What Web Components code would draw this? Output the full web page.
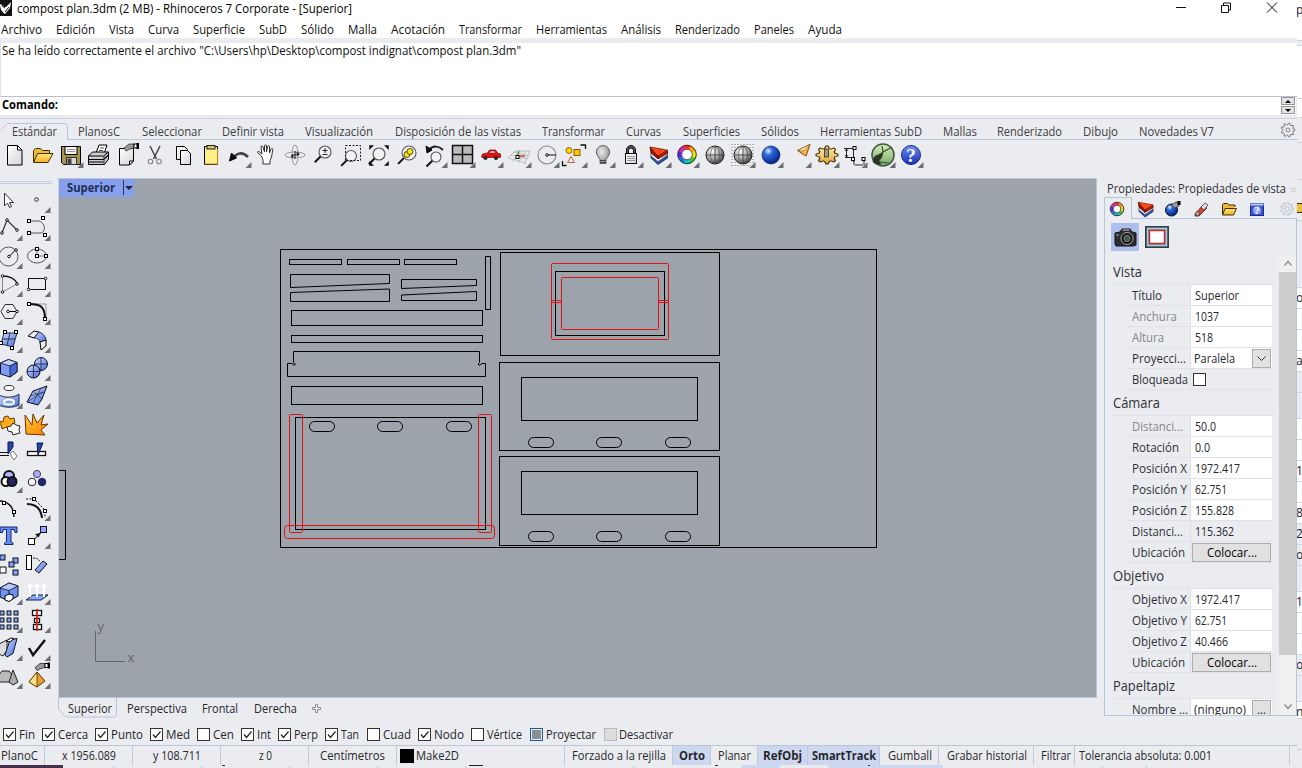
<!DOCTYPE html>
<html lang="es"><head><meta charset="utf-8"><title>compost plan.3dm - Rhinoceros 7 Corporate</title>
<style>
html,body{margin:0;padding:0;width:1302px;height:768px;overflow:hidden;background:#ebecf0}
body{font:12px/16px "Open Sans","Noto Sans",sans-serif;color:#202126}
</style></head><body>
<rhino-app></rhino-app>
<script>
const el=(name,css,html)=>{
  customElements.define(name,class extends HTMLElement{
    connectedCallback(){
      if(this.shadowRoot)return;
      const r=this.attachShadow({mode:'open'});
      r.innerHTML='<style>*{box-sizing:border-box}:host{display:block;box-sizing:border-box}'+css+'</style>'+(typeof html==='function'?html(this):html);
    }
  });
};

/* Label that condenses its glyphs to an exact advance width */
customElements.define('fit-text',class extends HTMLElement{
  connectedCallback(){
    if(this.shadowRoot)return;
    const w=+this.getAttribute('w');
    const r=this.attachShadow({mode:'open'});
    r.innerHTML=`<style>:host{display:inline-block;flex:none;width:${w}px;white-space:pre}span{display:inline-block;transform-origin:0 50%}</style><span><slot></slot></span>`;
    const s=r.querySelector('span'),n=s.getBoundingClientRect().width;
    if(n)s.style.transform=`scaleX(${w/n})`;
  }
});
const T=(t,w,a='')=>`<fit-text w="${w}" ${a}>${t}</fit-text>`;
/* items: [label, start, width] laid one after another */
const line=items=>{let p=0;return items.map(([t,x,w,a])=>{const m=x-p;p=x+w;return T(t,w,`style="margin-left:${m}px${a?';'+a:''}"`)}).join('')};

/* ---------- icons: 28 by 28 cells ---------- */
const sq=(x,y,s=3)=>`<rect x="${x-s/2}" y="${y-s/2}" width="${s}" height="${s}" fill="#fff" stroke="#000"/>`;
const dot=(x,y)=>`<circle cx="${x}" cy="${y}" r="1.3" fill="#fff" stroke="#000" stroke-width=".9"/>`;
const L=(d,c='#000',w=1,x='')=>`<path d="${d}" fill="none" stroke="${c}" stroke-width="${w}" ${x}/>`;
const P=(d,f,c='#000',w=1)=>`<path d="${d}" fill="${f}" stroke="${c}" stroke-width="${w}" stroke-linejoin="round"/>`;
const C=(x,y,r,f,c='#000',w=1)=>`<circle cx="${x}" cy="${y}" r="${r}" fill="${f}" stroke="${c}" stroke-width="${w}"/>`;
const R=(x,y,w,h,f,c='#000',sw=1)=>`<rect x="${x}" y="${y}" width="${w}" height="${h}" fill="${f}" stroke="${c}" stroke-width="${sw}"/>`;
const wheel=(x,y,r)=>{const cs=['#ff2a1a','#ff9a00','#f2e600','#39c41f','#00c7c0','#1670ee','#5b22e0','#e01bb4'];let s='';
  cs.forEach((c,i)=>{const a=(i*45-112.5)*Math.PI/180,b=(i*45-66)*Math.PI/180,q=r-2;
  s+=L(`M${x+q*Math.cos(a)} ${y+q*Math.sin(a)}A${q} ${q} 0 0 1 ${x+q*Math.cos(b)} ${y+q*Math.sin(b)}`,c,r*.4)});
  return s+C(x,y,r-.2,'none','#222',.9)+C(x,y,r*.55,'#fff','#333',.8)};
const gear=(x,y,r,f,c,n=8,w=1)=>{let d='';for(let i=0;i<n*4;i++){const a=(i-.5)*Math.PI/(2*n),q=(i%4<2)?r:r*.74;d+=(i?'L':'M')+(x+q*Math.cos(a)).toFixed(2)+' '+(y+q*Math.sin(a)).toFixed(2)}return P(d+'Z',f,c,w)};
const brush=(x,y)=>P(`M${x} ${y+4}l5-4 5 0v4l-4 1-4 2z`,'#9a9a9a','#333',.8)+R(x+10,y,4,4,'#fff')+R(x+13,y-.5,1.5,5,'#000');
const layers=(s=1)=>`<g transform="translate(14 14) scale(${s}) translate(-14 -14)">`+P('M7 13l7 7 9.500-6v3l-9.500 6.500L7 17z','#2554a8','#12254f',.8)+P('M7 11l7 6 9.500-6v3L14 20.500 7 15z','#fff','#556',.7)+P('M6 6l8 9v3l-7-6z','#8e1606','#400',.7)+P('M14 15l9.500-5.500v3L14 18z','#b51d08','#400',.7)+P('M6 6l17.500 3.200L14 15z','#ff4a18','#7a1000',.8)+'</g>';
const ball=(id)=>C(15,14,9,`url(#${id})`,'#222',1)+L('M6.500 14h17M15 5.500v17','#333',.8)+`<ellipse cx="15" cy="14" rx="4.500" ry="8.500" fill="none" stroke="#444" stroke-width=".6"/>`;
const mag=(x,y,r)=>L(`M${x-r*.7} ${y+r*.7}l-6 6`,'#111',2)+C(x,y,r,'rgba(255,255,255,.35)','#555',1.1);
const bx=(x,y,f='#7ea0ff',s=5)=>R(x,y,s,s,f,'#111',1);
const defs=`<defs>
<linearGradient id="pg" x2="1" y2="1"><stop offset="0" stop-color="#fff"/><stop offset="1" stop-color="#d3d5d8"/></linearGradient>
<linearGradient id="fo" x2="0" y2="1"><stop offset="0" stop-color="#ffe27a"/><stop offset="1" stop-color="#f0b429"/></linearGradient>
<linearGradient id="ge" x2="0" y2="1"><stop offset="0" stop-color="#fff0b0"/><stop offset="1" stop-color="#dba53a"/></linearGradient>
<linearGradient id="ex" x2="1" y2="1"><stop offset="0" stop-color="#ffd23a"/><stop offset="1" stop-color="#ff7800"/></linearGradient>
<radialGradient id="gb" cx=".35" cy=".3" r=".8"><stop offset="0" stop-color="#fff"/><stop offset=".5" stop-color="#a8a8a8"/><stop offset="1" stop-color="#303030"/></radialGradient>
<radialGradient id="bu" cx=".4" cy=".35" r=".8"><stop offset="0" stop-color="#eee"/><stop offset="1" stop-color="#777"/></radialGradient>
<radialGradient id="bb" cx=".35" cy=".28" r=".75"><stop offset="0" stop-color="#e8f2ff"/><stop offset=".3" stop-color="#2f6ce0"/><stop offset="1" stop-color="#021e80"/></radialGradient>
<linearGradient id="gr" x2="0" y2="1"><stop offset="0" stop-color="#d5efb8"/><stop offset="1" stop-color="#77a968"/></linearGradient>
<linearGradient id="qb" x2="0" y2="1"><stop offset="0" stop-color="#6f8ef5"/><stop offset="1" stop-color="#1a31ae"/></linearGradient>
<linearGradient id="bl" x2="1" y2="1"><stop offset="0" stop-color="#cfdcff"/><stop offset="1" stop-color="#4468dc"/></linearGradient></defs>`;
const I={
new:P('M7.500 4.500h10l4.500 4.500v15H7.500z','url(#pg)')+P('M17.500 4.500v4.500h4.500z','#fff'),
open:P('M5.500 21V9.500l2-2h5l2 2h7v3','#eeb93c','#3c2f00')+P('M5.500 21.500l4-9h15.500l-5 9z','url(#fo)','#3c2f00'),
save:P('M5.500 5.500h19v18H7.500l-2-2z','#a8964a')+R(9,5.500,12,8,'#f3f3f3')+L('M11 8.500h8M11 10.500h8','#999')+R(10.500,16.500,10,7,'#d9d9d9','#333')+R(12,18,3,5,'#444','#444'),
print:P('M12 12l3-8h8l-3 9','#fff')+L('M16 7h4M15 9.500h4','#555')+P('M4.500 15l4-4h16v7l-4 5.500h-16z','#ccc')+P('M4.500 15h15l5-4','none')+L('M4.500 18.500h15l5-4.500M4.500 21h15','#000',1.2)+L('M20 15v8','#333'),
page:P('M7.500 7.500h14V20l-4 4h-10z','url(#pg)')+P('M21.500 20h-4v4z','#fff')+brush(12,3),
cut:L('M10 5l6.500 13M20 5l-6.500 13','#444',1.500)+C(10.500,20.500,2.300,'none','#888',1.1)+C(19,20.500,2.300,'none','#888',1.1),
copy:P('M8.500 5.500h8l3 3v10h-11z','url(#pg)')+P('M12.500 9.500h7l3 3v11h-10z','url(#pg)'),
paste:P('M8.500 5.500h13v18h-13z','#fff08a')+R(11,4.500,8,3.500,'#d8c36b','#222')+L('M21.500 8v15h-13','#c58d19',1.2),
undo:L('M9 17c5-6 10-6 15-1','#444',2.600)+P('M5.500 20l2-8 5 5z','#111'),
hand:P('M9.500 15L6 12c-1-1 0-2 1-1.500l3 2.500-1-7c0-1.500 1.500-1.500 2 0l1.500 5V5c0-1.500 2-1.500 2 0v6l1-5.500c.4-1.300 2-1 2 .5v6l1.500-4c.5-1 2-.6 1.800.6L19.500 16l-1.500 3.500V23h-7v-4z','#fff','#333'),
orbit:`<ellipse cx="15" cy="14" rx="10" ry="3" fill="none" stroke="#999"/><ellipse cx="15" cy="14" rx="3" ry="10" fill="none" stroke="#999"/>`+L('M15 10v8M11 14h8','#222',1.1)+P('M11 15.500l2-1.500v3zM17 11l2.500 2-2.500 1z','#222','#222',.6),
zoom:mag(17,11,6)+L('M14.500 9.500h5M17 7v5M14.500 13.500h5','#222'),
zwin:mag(15,15,5.500)+`<rect x="9.500" y="4.500" width="15" height="15" fill="none" stroke="#222" stroke-dasharray="2 1.500"/>`,
zext:mag(15,13,6)+P('M5.500 4.500h4l-4 4zM24.500 4.500v4l-4-4zM24.500 24.500h-4l4-4zM5.500 24.500v-4l4 4z','#111','#111',.5),
zsel:mag(17,12,7)+C(15,13.500,3,'#ffe500','#222',.8)+C(18,10.500,3,'#ffe500','#222',.8),
zund:L('M9 9c4-5 10-4 14 0','#222',2)+P('M6 5l1 7 5-3z','#111')+mag(16,16,5),
four:R(4.500,4.500,20,18,'#bbb','#111',1.500)+L('M14.500 4v19M4 13.500h21','#111',1.500),
car:P('M5.500 16l1-3 5-1 2-3h6l2 3 3 1v3.500H6z','#e01515','#7a0000',.7)+P('M13 12l1.200-2h4.300l1.200 2z','#f4dede','#800',.5)+C(9.500,17,1.600,'#333','#222')+C(20,17,1.600,'#333','#222'),
cpl:L('M4 17l7-7h15M8 21l9-11M4 17l18 5M7 14l17 4M9 11l17 4M14 22l8-12M20 23l6-13','#b2b2b2',.8)+L('M13 15l2-5','#22a022',1.200)+L('M13 15h8','#d11',1.200)+sq(13.500,16),
circ:C(15,14,9,'none','#888',1.1)+L('M15 14h9','#222',1.100)+dot(15,14),
objs:C(9,9.500,3,'#ffd400','#a06800')+R(14,8.500,6,6,'#ffc400','#8a5c00')+P('M11 15.500l3.500 6h-7z','none','#c06030')+L('M20.500 4h5v4M2.500 20v4.500h4','#111',1.300),
bulb:P('M15 4.500a6.600 6.600 0 0 0-5 11l2 3v4h6v-4l2-3a6.600 6.600 0 0 0-5-11z','url(#bu)','#666')+L('M12 19.500h6M12 21.500h6','#444',1),
lock:P('M10.500 13V9a4.500 4.500 0 0 1 9 0v4h-2V9.500a2.500 2.500 0 0 0-5 0V13z','#555','#111')+R(9.500,12.500,11,10,'url(#pg)','#111')+L('M11 15.500h8M11 17.500h8M11 19.500h8','#999'),
layers:layers(),
wheel:wheel(15,13.500,9.500),
shade:ball('gb'),
rend:L('M3 3.500h24M3 6.500h24M3 9.500h24M3 12.500h24M3 15.500h24M3 18.500h24M3 21.500h24M3 24.500h24','#b4b4b4',1,'stroke-dasharray="2 1"')+ball('gb'),
blue:C(15,14,9,'url(#bb)','#0a1f60',.7),
spot:P('M13.500 9.500l12.500-6-4 11.500z','#ffb84b','#7b4300')+P('M13.500 9.500l12.500-6-6 6.500z','#fff0c0','#7b4300',.5),
gear:`<g transform="translate(0 2.500) scale(1 .82)">${gear(15,14,11,'url(#ge)','#3f2d00',8,1.2)}</g>`+R(12.500,8,4,8,'#999','#3f2d00',.8),
dim:L('M6.500 8v8M4 7.500h11M5 16.500h7M13.500 7v14M14 20v4M24 20v4M15 24h8','#111',.9)+sq(14.500,7)+sq(13,18)+sq(23.500,18)+L('M5 10l1.500-2 1.500 2M5 14l1.500 2 1.500-2','#111',.8),
gh:C(15,14,11,'url(#gr)','#4a5a48',1.600)+P('M5 21c0-4 2-7 5-7l5-3-1 5-3 4 2 3c-3 1-6 0-8-2z','#2a3427','#2a3427',.5)+L('M14 5l1 6 9-5M12 21l9 1','#38512f',1.200),
help:C(15,14,9.500,'url(#qb)','#1a2a80')+`<text x="15" y="20.500" font-family="Liberation Serif,serif" font-weight="700" font-size="19" fill="#fff" text-anchor="middle">?</text>`,
ptr:P('M9.500 7v13l3-3 2 4.500 2-1-2-4h4z','#fff','#333'),
point:C(13.500,13.500,1.800,'#fff','#222'),
pline:L('M7 19l5-13 10 10','#333',1.200)+dot(7,19)+dot(12,6)+dot(22,16),
crv:L('M6 7h10c7 2 7 12 1 12H7','#555')+sq(6,7)+sq(20,4)+sq(6,19)+sq(22,21),
cir:C(13.500,14.500,9.500,'none','#555')+L('M14.500 14l6-6')+dot(14,14.500)+dot(21,8),
ellp:`<ellipse cx="14" cy="14" rx="9.500" ry="7" fill="none" stroke="#555"/>`+L('M14 14h9M14 14V7','#777')+sq(14,14)+sq(14,7)+sq(23,14),
arc:L('M7.500 6v16M7.500 22L22 14','#888',1)+L('M7.500 6c7 0 13 3 15 8','#111',1.500)+dot(7.500,6)+dot(7.500,22)+dot(22,14),
rect:R(5.500,8.500,17,11,'none','#111')+dot(5.500,19.500)+dot(22.500,8.500),
poly:P('M6 13.500l4-7h8l4 7-4 7h-8z','none','#333')+L('M13 13.500h9')+dot(13,13.500)+dot(22,13.500),
fil:L('M6 6h17v14','#999')+L('M6 6c12 0 16 3 16 15','#111',2)+sq(6,6)+sq(22,21),
srf:P('M9 7h13l-4 14-12-3z','url(#bl)','#234')+L('M15 7l-3 12M8 13h12','#234')+sq(10,6)+sq(21,6)+sq(6,17)+sq(17,22),
bend:P('M5 10l6-5 5 1-5 6z','#eee')+P('M11 12l5-6c5 2 7 5 7 9l-6 2c0-3-2-5-6-5z','url(#bl)','#234')+P('M17 16l6-2v6l-5 4z','#eee'),
cube:P('M5.500 9l8-3.500 8.500 3v9.500l-7 5-9.500-3z','#7d9af4','#112')+P('M5.500 9l8-3.500 8.500 3-7 3.500z','#c3d1ff','#112',.8)+P('M15 12l7-3.500V18l-7 5z','#4767d8','#112',.8),
sph:C(18,10,6.500,'url(#bl)','#112')+C(10.500,17.500,6.500,'url(#bl)','#112')+L('M10.500 11v13M4 17.500h13M18 3.500v13M12 10h12','#112',.7),
cyl:`<ellipse cx="14" cy="6" rx="5" ry="2.500" fill="#fff" stroke="#333"/>`+P('M4 13c5 3 15 3 20-1v11c-5 3-15 3-20 0z','url(#bl)','#234')+`<ellipse cx="14" cy="20" rx="5" ry="2.600" fill="#86a0ee" stroke="#fff" stroke-width="2"/>`,
patch:P('M4 20l6-11 14-5-5 13-4 6z','url(#bl)','#112')+L('M7 14l14-4M10 21l8-15M4 20l16-10M10 9l9 8','#234',.7),
puz:P('M4 11l4 1 1-5 4-1 2 3 4-1 1 5-3 2 1 3-4 1-3-2-4 2-1-4z','#ffac1c','#6b3900')+P('M12 17l4-1 2-3 3 2 4 1-1 4 1 3-4 1-3 1-1-3-4-1z','#fff','#222'),
exp:P('M3 24L2 5l7 10 1-11 4 9 7-8-3 10 7-1-7 6 4 5z','url(#ex)','#6b3200'),
trim:P('M13 4h5v5l-5 7z','#28459c','#001a66')+L('M4 14.500h9M4 17.500h10','#111',1.2)+P('M15 16l3-3 4 5-3 4z','#fff','#777'),
split:R(4.500,13.500,18,4,'#fff','#111',1.300)+P('M14 5h6l-5 12z','#28459c','#001a66'),
bool:C(14,10,5,'#b5b9ff','#111',2)+C(11,15.500,4.500,'#fff','#111',2)+C(17,15.500,4.500,'#24246c','#111',2),
comp:C(14,8,3.600,'#aaa7ff','#444')+C(9,16,3.800,'#fff','#222')+C(19,16,3.800,'#24246c','#24246c'),
arccrv:L('M4 7c8 0 15 5 15 16','#111',1.400)+sq(9,9)+sq(19,18),
offs:L('M4 10c9 0 14 5 15 14','#111',2)+L('M3 5h8l11 11v8','#111',1,'stroke-dasharray="2 1.500"')+sq(11,5)+sq(22,17),
text:P('M5 5h17v5.500h-2l-1-3h-3v12l2 1.500v1.500H9.500v-1.500l2-1.500v-12h-3l-1 3H5z','#668af4','#14276f'),
move:L('M9 20L19 9')+P('M12.500 12.500l5-1.500-2 4z','#111','#111',.5)+bx(5.500,16.500,'#fff',6)+bx(17.500,4.500,'#8ea9ff',6),
arr:bx(5,5)+bx(18,8)+bx(14,12)+bx(18,20)+bx(5,17,'#fff',6),
rot:R(3.500,5.500,5,14,'#fff')+L('M10 8c4 0 6 1 7 4','#222',1,'stroke-dasharray="2 1"')+P('M12 20l8-9 4 3-8 9z','url(#bl)','#112'),
cubec:P('M5 10l9-5 9 3v10l-9 5-9-4z','#6e90f2','#112')+P('M5 10l9-5 9 3-9 4.500z','#b7c8ff','#112',.8)+L('M14 12.500V22','#112')+P('M10 18l4-2 4 1v4l-4 2.500-4-1.500z','#fff'),
extr:P('M3 22l7-5h15l-7 5z','#83a5ff','#123')+L('M7 19V8M14 19V7M21 19V8','#fff',2)+P('M4 9l3-4 3 4zM11 9l3-4 3 4zM18 9l3-4 3 4z','#fff','#fff',.4),
grid:[5,12,19].map(x=>[5,12,19].map(y=>bx(x,y,'#8aa5f5',4)).join('')).join(''),
align:R(9.500,4.500,9,5,'#fff','#111',1.300)+R(11.500,12.500,5,4,'#fff','#111',1.300)+R(10.500,18.500,8,5,'#fff','#111',1.300)+L('M14 3v22','#e01818',1.800),
tilt:P('M4 10l8-4v10l-4 6-4-2z','#ddd','#222')+P('M15 6l7-1.500-4 15-6 3.500-2-2z','url(#bl)','#112')+P('M11 7l5-3 3 .5-4 3.500z','#fff'),
check:L('M6 14l4 7 12-15','#111',2.400),
solid:P('M3 14l4-5h7l4 5-1 6H6l-3-1z','#bbb','#222')+P('M18 8l5 12-5 3-4-3z','#aaa','#222'),
pyr:P('M14 10l8 9-8 6-8-5z','#e8a030','#553300')+P('M14 10v15l-8-5z','#ffe08a','#553300',.8)+brush(12,1.5),
folder:P('M7.500 20V9.500l1-1h4l1.500 1.500h6v2','#eeb93c','#3c2f00')+P('M7.500 20l2.500-6.500h11.500l-3 6.500z','url(#fo)','#3c2f00'),
bomb:C(12.500,15,6,'url(#bb)','#112')+P('M12 10l5-3 3 0v4l-4 2z','#9a9a9a','#333',.8)+R(19,6.500,2,3,'#111'),
tube:P('M8 19l8-9 4 3-8 8-4 0z','#d44426','#612',.8)+P('M14 12l4-4 3 2-4 5z','#ddd','#444',.8)+P('M8 19l2-3 3 3-2 2z','#aaa','#444',.8),
helpb:R(7.500,8.500,13,12,'#3c57c5','#1a2a8a')+R(7.500,8.500,13,2,'#bcccf6','#6c86d0',.5)+C(14,15.300,4,'#8fa6ee','none')+`<text x="14" y="19" font-family="Liberation Serif,serif" font-weight="700" font-size="10" fill="#fff" text-anchor="middle">?</text>`,
wheels:wheel(14,14,7),layers2:layers(.85),
pale:gear(14,14,6.500,'none','#b8c0c8',9)+C(14,14,2.500,'none','#b8c0c8'),
opts:gear(14,14,7,'#ebecf0','#777',9)+C(14,14,2,'none','#777',.9)
};
el('rh-icon',':host{width:28px;height:28px;flex:none}svg{display:block;overflow:visible}',h=>
`<svg width="28" height="28" viewBox="0 0 28 28">${defs}${I[h.getAttribute('name')]||''}${h.hasAttribute('more')?'<path d="M21.500 27h6v-6z" fill="#6d6e71"/>':''}</svg>`);
const icon=s=>{const m=s.endsWith('+');return `<rh-icon name="${s.replace('+','')}" ${m?'more':''}></rh-icon>`};

el('title-bar',':host{display:flex;height:20px;background:#fff;align-items:flex-start;color:#000}.logo{width:16px;height:16px;margin-right:1px}.cap{margin-top:1px}.b{margin-left:824px;margin-top:2px}',
`<svg class="logo" viewBox="0 0 16 16"><path d="M0 0h12v16H0z" fill="#111"/><path d="M0 4c3 1 3 3 6 3l5-5-1 6-5 6C2 12 0 9 0 4z" fill="#fff"/><path d="M2 6l3 2M5 12l4-5" stroke="#111"/></svg>
<div class="cap">${T('compost plan.3dm (2 MB) - Rhinoceros 7 Corporate - [Superior]',335,'')}</div>
<svg class="b" width="104" height="14" fill="none" stroke="#111"><path d="M0 5.500h10M45.500 3.500h7v7h-7zM47.500 3v-2h7v7h-2M91 .5l10 10M101 .5l-10 10"/></svg>`);

el('menu-bar',':host{display:flex;height:18px;background:#fff;color:#111;padding-top:2px}',()=>line([['Archivo',1,41],['Edición',56,39],['Vista',109,25],['Curva',148,31],['Superficie',193,52],['SubD',259,28],['Sólido',301,33],['Malla',348,29],['Acotación',391,54],['Transformar',459,63],['Herramientas',536,71],['Análisis',621,40],['Renderizado',675,65],['Paneles',754,40],['Ayuda',808,34]]));

el('command-area',`:host{height:80px;border-top:5px solid #ebecf0;background:#ebecf0}
.h{height:54px;background:#fff;border-left:1px solid #dfe2e8;border-bottom:1px solid #b9c2d2;padding:0 0 0 1px;color:#111}
.p{display:flex;height:18px;background:#fff;padding-left:2px;font-weight:700;color:#000;justify-content:space-between;margin-right:1px}
.s{display:flex;flex-direction:column;gap:1px;width:14px;margin-right:1px;padding-top:0}
.s i{height:8px;background:#e3e3e3;border:1px solid #999;display:grid;place-items:center}
svg{display:block}.e{border-top:1px solid #cdd3de;margin-top:3px}`,
`<div class="h">${T('Se ha leído correctamente el archivo "C:\\Users\\hp\\Desktop\\compost indignat\\compost plan.3dm"',519)}</div>
<div class="p">${T('Comando:',56)}<div class="s"><i><svg width="6" height="3"><path d="M0 3h6L3 0z"/></svg></i><i><svg width="6" height="3"><path d="M0 0h6L3 3z"/></svg></i></div></div><div class="e"></div>`);

el('toolbar-tabs',`:host{height:21px;display:grid;grid-template-columns:68px 1fr 24px;grid-template-rows:21px;color:#3c3d42}
.a{position:relative;display:flex;padding:5px 0 0 12px}.a svg{position:absolute;left:0;top:0}
.r,.o{border-bottom:1px solid #b9c5d9;display:flex;padding-top:5px}.o{padding:0}.o rh-icon{margin:-3px 0 0 1px}`,
`<div class="a"><svg width="68" height="21" fill="none" stroke="#b9c5d9"><path d="M.5 11.500l7-7H65q2.500 0 2.500 2.500v14"/></svg>${T('Estándar',45)}</div><div class="r">${line([['PlanosC',10,42],['Seleccionar',74,60],['Definir vista',154,62],['Visualización',237,68],['Disposición de las vistas',327,126],['Transformar',474,63],['Curvas',558,35],['Superficies',615,57],['Sólidos',693,38],['Herramientas SubD',752,102],['Mallas',875,34],['Renderizado',929,65],['Dibujo',1015,35],['Novedades V7',1071,75]])}</div><div class="o">${icon('opts')}</div>`);

el('tool-bar',':host{display:flex;height:38px;padding-top:1px}',()=>'new open save+ print page cut copy paste undo+ hand orbit zoom zwin zext zsel zund+ four+ car+ cpl+ circ+ objs+ bulb+ lock+ layers+ wheel+ shade rend+ blue+ spot+ gear+ dim+ gh+ help+'.split(' ').map(icon).join(''));

el('tool-palette',':host{width:58px;height:538px;overflow:hidden}.g{border-top:1px solid #c4cddd;border-bottom:1px solid #c4cddd;height:3px;width:52px;margin-top:3px}.t{display:grid;grid-template-columns:28px 28px;grid-auto-rows:28px;margin:2px 0 0 -5px}',()=>'<div class="g"></div><div class="t">'+'ptr point+ pline+ crv+ cir+ ellp+ arc+ rect+ poly+ fil+ srf+ bend+ cube+ sph+ cyl+ patch+ puz exp trim split bool+ comp arccrv offs+ text move+ arr rot cubec+ extr+ grid+ align+ tilt+ check+ solid+ pyr+'.split(' ').map(icon).join('')+'</div>');

/* Top view of the cut sheet, in window pixels */
const box=(x,y,X,Y,r=0)=>`<rect x="${x+.5}" y="${y+.5}" width="${X-x}" height="${Y-y}" rx="${r}"/>`;
const slots=(xs,y)=>xs.map(x=>box(x,y,x+25,y+10,5)).join('');
el('view-port',`:host{width:1039px;height:520px;background:#9da3ab;border:1px solid #bcc5d6;border-left-color:#c7cddb;overflow:hidden;display:grid}
svg,.tag{grid-area:1/1}svg{display:block}.tag{width:75px;height:18px;background:#86a0ee;display:flex;font-weight:700;color:#202c55;padding:1px 0 0 8px;z-index:1;align-items:flex-start}.dd{width:1px;height:15px;background:#334;margin:0 0 0 8px}.ar{border:4px solid transparent;border-top-color:#223;margin:6px 0 0 1px}`,
`<div class="tag">${T('Superior',48)}<i class="dd"></i><i class="ar"></i></div>
<svg width="1037" height="518" viewBox="59 179 1037 518" fill="none" stroke="#000">
<g>${box(280,249,876,547)}${box(289,259,341,264)}${box(347,259,399,264)}${box(404,259,456,264)}${box(485,256,490,309)}
<path d="M290.500 287.500v-13h99v9zM290.500 292.500v9h99v-12.500zM401.500 288.500v-9h75v6zM401.500 295v5.500h75v-9z"/>
${box(291,310,482,325)}${box(291,335,482,342)}${box(291,386,482,404)}
<path d="M293.500 362.500v-11h186v11M293.500 362.500l2 1.500-1.500 1.500-1.500-2h-5v13h198v-13h-4l-1.500 2-2-1.500 1.500-1.500"/>
${box(295,417,485,529)}${slots([309,377,446],421)}
${box(500,252,719,355)}${box(555,271,664,335)}${box(499,362,719,450)}${box(521,377,697,420)}${slots([528,596,665],437)}
${box(499,456,719,545)}${box(521,471,697,514)}${slots([528,596,665],531)}<path d="M58 470.500h7.500v89H58"/></g>
<g stroke="#e01218">${box(289,414,302,532,1)}${box(478,414,491,532,1)}${box(284,525,494,538,3)}${box(551,263,668,339,1)}${box(561,277,658,329,1)}<path d="M551 300.500h10M551 302.500h10M658 300.500h10M658 302.500h10"/></g>
<path d="M95.500 631v30.500H125" stroke="#62666d"/><g fill="#62666d" stroke="none" font-family="Open Sans,Noto Sans,sans-serif" font-size="13"><text x="97.500" y="631">y</text><text x="127.500" y="662">x</text></g></svg>`);

el('view-tabs',`:host{display:flex;height:20px;margin-left:58px;color:#26272b}.a{position:relative;width:59px;height:20px}.a svg{display:block}.a fit-text{position:absolute;left:10px;top:3px}.r{display:flex;padding-top:3px}.pl{margin:6px 0 0 15px}`,
`<div class="a"><svg width="59" height="20" fill="none" stroke="#b9c5d9"><path d="M.5 0v11l7 8H56q2.500 0 2.500-2.500V0"/></svg>${T('Superior',44)}</div><div class="r">${line([['Perspectiva',10,60],['Frontal',85,36],['Derecha',137,43]])}</div><svg class="pl" width="10" height="10"><path d="M3.500.5h2v3h3v2h-3v3h-2v-3h-3v-2h3z" fill="#fff" stroke="#888"/></svg>`);

el('snap-bar',`:host{display:flex;height:27px;padding-top:9px;color:#26272b}
.c{width:13px;height:13px;border:1px solid #333;background:#fff;flex:none;margin-top:1px}.c svg{display:block}
.m{border-color:#1f5a8c;background:#8d8d8d;box-shadow:inset 0 0 0 1px #ddeeff}.d{border-color:#bbb;background:#ddd}`,()=>{
let p=0;return [['Fin',3,19,16,1],['Cerca',42,58,30,1],['Punto',95,111,32,1],['Med',150,166,24,1],['Cen',197,213,21,0],['Int',241,257,14,1],['Perp',278,294,24,1],['Tan',325,341,18,1],['Cuad',367,383,28,0],['Nodo',418,434,30,1],['Vértice',471,487,35,0],['Proyectar',530,546,50,2],['Desactivar',604,619,54,3]].map(([t,b,x,w,k])=>{
const s=`<i class="c ${['','','m','d'][k]}" style="margin-left:${b-p}px">${k==1?'<svg width="11" height="11"><path d="M2 5.500l2.500 3 5-6" fill="none" stroke="#222" stroke-width="1.200"/></svg>':''}</i>`+T(t,w,`style="margin-left:${x-b-13}px"`);p=x+w;return s}).join('')});

el('status-bar',`:host{display:flex;height:20px;border-top:1px solid #b9c5d9;color:#26272b}
.c{height:19px;border-right:1px solid #c0c9da;display:flex;flex:none;padding-top:2px}.on{background:#cdd7f0;font-weight:700}.k{width:14px;height:14px;background:#000;margin:1px 2px 0 3px}`,()=>{
let p=0;return [['PlanoC',1,37,45],['x 1956.089',62,54,133],['y 108.711',153,48,221],['z 0',259,13,309],['Centímetros',320,65,397],['Make2D',416,43,565,2],['Forzado a la rejilla',572,94,673],['Orto',679,26,711,1],['Planar',718,33,758],['RefObj',763,39,808,1],['SmartTrack',812,64,880,1],['Gumball',888,44,939],['Grabar historial',947,80,1034],['Filtrar',1041,30,1075],['Tolerancia absoluta: 0.001',1079,133,1290]].map(([t,x,w,e,k])=>{
const s=`<div class="c ${k==1?'on':''}" style="width:${e-p}px">${k==2?'<i class="k"></i>'+T(t,w):T(t,w,`style="margin-left:${x-p}px"`)}</div>`;p=e;return s}).join('')});

el('under-strip',':host{height:3px}svg{display:block}','<svg width="1302" height="3"><path d="M0 0h63v3H0z" fill="#45304c"/><path d="M113.500 1v2M201.500 1v2M289.500 1v2M377.500 1v2M465.500 1v2M633.500 1v2M1102.500 1v2M1146.500 1v2" stroke="#bcc5d6"/><path d="M742 0h38v3h-38zM828 0h115v3H828z" fill="#cdd7f0"/><path d="M469 .5h14" stroke="#222" stroke-width="1"/><path d="M222 .5h3M715 .5h3M868 .5h2" stroke="#333"/></svg>');

el('prop-row',`:host{display:grid;grid-template-columns:63px 81px;height:21px;margin-left:15px}
.l{border-right:1px solid #dbdfe7;border-bottom:1px solid #dfe2e9;padding:3px 0 0 4px;color:#303136;height:21px}
:host([dim]) .l{color:#85868b}.v{border-bottom:1px solid #dfe2e9;padding:3px 0 0 4px;background:#fff;color:#26272b;display:flex;height:21px}
:host([kind=plain]) .v,:host([kind=button]) .v,:host([kind=check]) .v{background:transparent}
.btn{background:#e1e1e1;border:1px solid #adadad;height:19px;width:79px;text-align:center;margin:-2px 0 0 -3px;color:#000;padding-top:1px}
.ck{width:13px;height:13px;border:1px solid #333;background:#fff;margin:1px 0 0 -2px}
.dd{width:19px;height:19px;border:1px solid #adadad;background:#e1e1e1;margin:-2px 0 0 17px;display:grid;place-items:center;flex:none}
.dd.el{margin:-2px 0 0 6px}`,h=>{
const g=a=>h.getAttribute(a),k=g('kind');let v=g('value')?T(g('value'),+g('vw'),k=='drop'||k=='dots'?'style="margin-left:-1px"':''):'';
if(k=='button')v=`<div class="btn">${T('Colocar...',50)}</div>`;if(k=='check')v='<i class="ck"></i>';
if(k=='drop')v+='<i class="dd"><svg width="9" height="6"><path d="M.5.5l4 4 4-4" fill="none" stroke="#333"/></svg></i>';
if(k=='dots')v+=`<div class="dd el">${T('...',9)}</div>`;
return `<div class="l">${T(g('label'),+g('lw'))}</div><div class="v">${v}</div>`});
el('prop-group',':host{display:block}.h{height:26px;font-size:14px;border-bottom:1px solid #dfe2e9;padding-top:5px;color:#303136}',h=>`<div class="h">${T(h.getAttribute('label'),+h.getAttribute('lw'))}</div><slot></slot>`);
const row=(l,lw,v,vw,k='',dim='')=>`<prop-row label="${l}" lw="${lw}" value="${v}" vw="${vw}" kind="${k}" ${dim}></prop-row>`;

el('props-panel',`:host{width:193px;margin-left:7px;height:538px;display:flex;flex-direction:column;overflow:hidden;color:#303136}
.t{height:19px;flex:none;padding:3px 0 0 3px;display:flex}.t svg{margin:7px 0 0 4px}
.tabs{display:flex;height:22px;flex:none}.ic{display:flex;border-bottom:1px solid #b9c5d9;flex:1;height:22px}.ic rh-icon{margin-top:-2px}
.sel{width:28px;border:1px solid #b9c5d9;border-bottom:0;flex:none}.sel rh-icon{margin:-3px 0 0 -2px}
.ic rh-icon:first-child{margin-left:-1px}.ic rh-icon:last-child{margin-left:2px}
.b{height:497px;border:1px solid #b9c5d9;border-top:0;overflow:hidden;flex:none}
.s{display:flex;height:36px;padding:4px 0 0 6px;gap:6px}.s svg{display:block}
.w{display:flex;height:460px;overflow:hidden}.f{width:160px;margin:4px 14px 0 8px;flex:none;height:456px;overflow:hidden}
.sc{width:17px;background:#f0f0f0;display:flex;flex-direction:column;flex:none;margin-left:-8px}.sc svg{display:block}.th{height:383px;background:#cdcdcd}`,
`<div class="t">${T('Propiedades: Propiedades de vista',179)}<svg width="6" height="4"><path d="M0 .5h6M0 3h6" stroke="#c4c9d2"/></svg></div>
<div class="tabs"><div class="sel">${icon('wheels')}</div><div class="ic">${['layers2','bomb','tube','folder','helpb','pale'].map(icon).join('')}</div></div>
<div class="b"><div class="s"><svg width="28" height="28"><path d="M0 0h28v28H0z" fill="#aebfee"/><path d="M4 10l5-1 2-3h8l2 3 4 1v12l-3 1H5l-1-2z" fill="#2a2c2e" stroke="#111"/><path d="M11 8l1-2h6l1 2z" fill="#777"/><circle cx="16" cy="15.500" r="6" fill="#111" stroke="#aaa"/><circle cx="16" cy="15.500" r="3.200" fill="#3c5b50" stroke="#777"/><path d="M5 12h3" stroke="#aaa"/></svg>
<svg width="24" height="28"><path d="M.8 3.800h22.400v20.400H.8z" fill="#80adc0" stroke="#333d44" stroke-width="1.600"/><path d="M4.500 7.500h15v13h-15z" fill="#fff" stroke="#c22" stroke-width="1.400"/><path d="M2.500 5.500h19v17h-19z" fill="none" stroke="#a9c9d4"/></svg></div>
<div class="w"><div class="f">
<prop-group label="Vista" lw="29">${row('Título',30,'Superior',44)}${row('Anchura',45,'1037',24,'','dim')}${row('Altura',32,'518',18,'','dim')}${row('Proyecci...',54,'Paralela',41,'drop')}${row('Bloqueada',56,'',0,'check')}</prop-group>
<prop-group label="Cámara" lw="47">${row('Distanci...',51,'50.0',21,'','dim')}${row('Rotación',47,'0.0',15)}${row('Posición X',55,'1972.417',45)}${row('Posición Y',55,'62.751',32)}${row('Posición Z',55,'155.828',39)}${row('Distanci...',51,'115.362',39,'plain')}${row('Ubicación',53,'',0,'button')}</prop-group>
<prop-group label="Objetivo" lw="51">${row('Objetivo X',55,'1972.417',45)}${row('Objetivo Y',55,'62.751',32)}${row('Objetivo Z',55,'40.466',33)}${row('Ubicación',53,'',0,'button')}</prop-group>
<prop-group label="Papeltapiz" lw="62">${row('Nombre ...',56,'(ninguno)',52,'dots')}</prop-group>
</div><div class="sc"><svg width="17" height="17" fill="none" stroke="#888" stroke-width="1.200"><path d="M5.500 10.500l3.500-4 3.500 4"/></svg><div class="th"></div><svg width="17" height="60" fill="none" stroke="#888" stroke-width="1.200"><path d="M5.500 49.500l3.500 4 3.500-4"/></svg></div></div></div>`);

/* Sliver of the window lying behind, at the right edge */
el('edge-strip',`:host{width:5px;height:768px;overflow:hidden;background:#ebecf0;display:flex;flex-direction:column;color:#222}
div{flex:none;overflow:hidden;border-bottom:1px solid #cfd5df;white-space:nowrap;padding-top:2px}.w{background:#fff}
.f{padding-top:23px}.f i{display:block;height:10px;background:#f3bd3c;border:1px solid #3c2f00;border-width:1px 0 1px}`,()=>
[[41,'w','p'],[5,'',''],[53,'w',''],[19,'w',''],[25,'',''],[37,'',''],[41,'f','<i></i>'],[67,'',''],[21,'w','o'],[21,'w',''],[21,'w',''],[21,'w','a'],[21,'',''],[26,'',''],[21,'w',''],[21,'w',''],[21,'w','1'],[21,'w',''],[21,'w','8'],[21,'','2'],[21,'','o'],[26,'',''],[21,'w','1'],[21,'w',''],[21,'w',''],[21,'','o'],[26,'',''],[17,'w','n'],[31,'',''],[20,'','']].map(([h,c,t])=>`<div class="${c}" style="height:${h}px;text-indent:-1px">${t}</div>`).join(''));

el('rhino-app',`:host{display:grid;grid-template-columns:1297px 5px;width:1302px;height:768px;overflow:hidden}
.m{display:grid;grid-template-columns:58px 1039px 200px;height:520px}.win{height:768px;overflow:hidden;min-width:0}
props-panel{z-index:1}`,
`<div class="win"><title-bar></title-bar><menu-bar></menu-bar><command-area></command-area><toolbar-tabs style="margin-top:1px"></toolbar-tabs><tool-bar></tool-bar>
<div class="m"><tool-palette></tool-palette><view-port></view-port><props-panel></props-panel></div>
<view-tabs></view-tabs><snap-bar></snap-bar><status-bar></status-bar><under-strip></under-strip></div><edge-strip></edge-strip>`);
</script></body></html>
